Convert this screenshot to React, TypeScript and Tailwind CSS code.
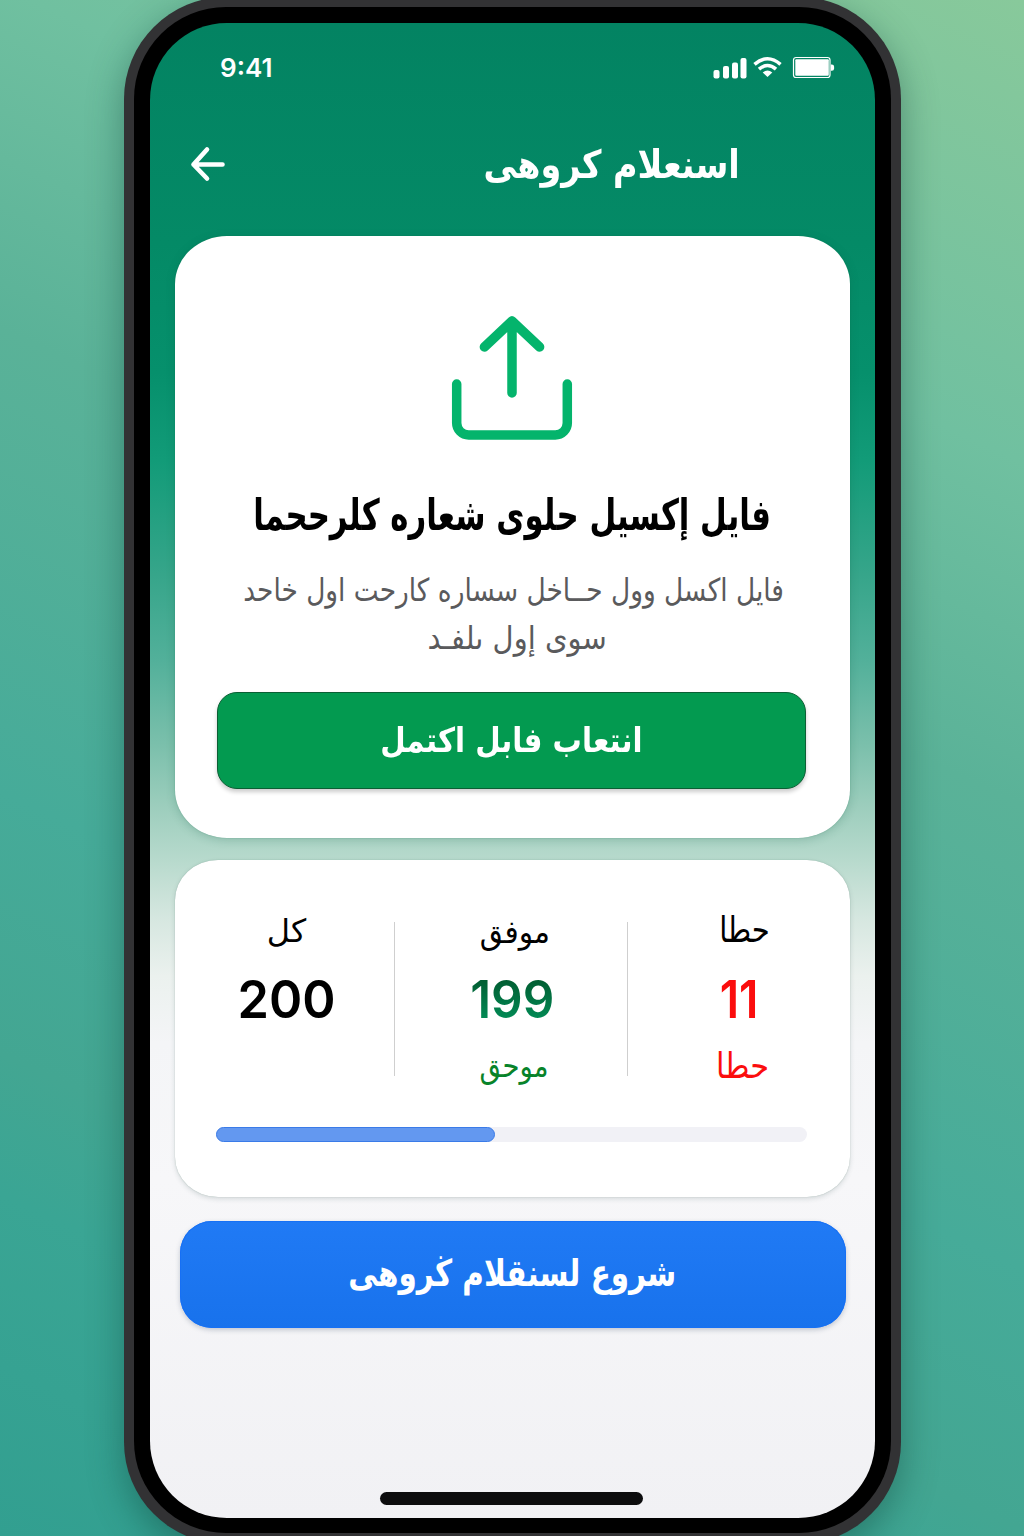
import React from "react";

const fa = "font-['DejaVu_Sans','Noto_Sans',sans-serif]";

function StatusIcons() {
  return (
    <svg className="mt-[32px] h-[26px] w-[124px]" viewBox="0 0 124 26" fill="#fff">
      <rect x="1.500" y="15" width="6" height="8.500" rx="2" />
      <rect x="11" y="11" width="6" height="12.500" rx="2" />
      <rect x="20" y="7.500" width="6" height="16" rx="2" />
      <rect x="28.500" y="3" width="6" height="20.500" rx="2" />
      <g fill="none" stroke="#fff" strokeWidth="3.600">
        <path d="M42.500 9.300 Q55.500 -1.800 68.500 9.300" />
        <path d="M47 14.200 Q55.500 6.800 64 14.200" />
      </g>
      <path d="M50.700 17.600 Q55.500 13.600 60.300 17.600 L55.500 22 Z" />
      <rect x="81.500" y="2.500" width="36.500" height="20" rx="2.500" fill="none" stroke="#fff" strokeWidth="1.200" />
      <rect x="83.300" y="4.300" width="33.500" height="16.500" rx="1" />
      <path d="M118.800 9.500 h1 a2.300 2.300 0 0 1 2.300 2.300 v1.600 a2.300 2.300 0 0 1 -2.300 2.300 h-1 z" />
    </svg>
  );
}

function Word({ className, children }: { className: string; children: React.ReactNode }) {
  return (
    <div dir="rtl" className="flex justify-center">
      <span className={`inline-block whitespace-nowrap ${className}`}>{children}</span>
    </div>
  );
}

export default function App() {
  return (
    <div
      className={`flex h-[1536px] w-[1024px] items-start overflow-hidden bg-[linear-gradient(205deg,#88c99b_0%,#70c0a0_23%,#5ab298_40%,#46ab99_63%,#43a692_76%,#3aa594_83%,#329f90_100%)] pl-[123.500px] ${fa}`}
    >
      <div className="-mt-[3px] h-[1547px] w-[777.500px] shrink-0 rounded-[102px] bg-[#323234] px-[10.500px] pt-[10px] pb-[11px] shadow-[0_12px_36px_rgba(10,60,50,0.42)]">
        <div className="h-full rounded-[92px] bg-black px-4 pt-4 pb-[15px]">
          <div className="flex h-[1495px] flex-col rounded-[77px] bg-[linear-gradient(180deg,#038362_0px,#048a66_220px,#06906c_350px,#129b78_437px,#36a58a_551px,#52b09a_637px,#7cc0ac_724px,#9bcdbc_781px,#b8dacd_838px,#d6e7e0_896px,#ebf1ee_953px,#f4f5f7_1020px,#f7f7f9_1157px,#f1f1f4_1494px)] pr-[24.500px] pl-[25px]">
            <div className="flex h-[90px] items-start justify-between pr-[14px] pl-[45px]">
              <span className="mt-[28px] font-['Inter'] text-[26px] leading-[34px] font-semibold text-white">9:41</span>
              <StatusIcons />
            </div>
            <div className="flex h-[123px] items-start">
              <svg className="mt-[32px] ml-[14px] h-[38px] w-[38px]" viewBox="0 0 38 38" fill="none" stroke="#fff" strokeWidth="4.600" strokeLinecap="round" strokeLinejoin="round">
                <path d="M33.500 19.500H4.500M18 4.500 4.500 19.500l13.500 14" />
              </svg>
              <div className="mt-[22px] ml-[248px] w-[273px]">
                <Word className="scale-x-[0.857] text-[39px] leading-[60px] font-bold text-white">اسنعلام کروهی</Word>
              </div>
            </div>

            <div className="h-[601.500px] shrink-0 rounded-[52px/48px] bg-white px-[42px] pt-[79px] shadow-[0_2px_10px_rgba(20,90,70,0.22),0_0_1px_rgba(0,110,70,0.5)]">
              <svg className="mx-auto h-[126px] w-[124px]" viewBox="0 0 124 126" fill="none" stroke="#04b46c" strokeWidth="9.500" strokeLinecap="round" strokeLinejoin="round">
                <path d="M61 78V6M33.400 32 61 6l27.600 26M5.700 69v39a12 12 0 0 0 12 12h86.600a12 12 0 0 0 12-12V69" />
              </svg>
              <div className="mt-[42px]">
                <Word className="scale-x-[0.717] text-[43px] leading-[64px] font-bold text-black">فایل إکسیل حلوی شعاره کلرححما</Word>
              </div>
              <div className="mt-[19px]">
                <Word className="translate-x-[1px] scale-x-[0.838] text-[31.500px] leading-[48px] text-[#5a5a5c]">فایل اکسل وول حــاخل سساره کارحت اول خاحد</Word>
                <Word className="translate-x-[5px] scale-x-[0.905] text-[32px] leading-[48px] text-[#5a5a5c]">سوی إول ىلفـد</Word>
              </div>
              <button className="mt-[30px] block h-[97px] w-[589px] rounded-[20px] border border-[#0b5f34] bg-[#039a50] shadow-[0_3px_4px_rgba(0,0,0,0.2)]">
                <Word className="scale-x-[0.861] text-[34px] leading-[95px] font-bold text-white">انتعاب فابل اکتمل</Word>
              </button>
            </div>

            <div className="mt-[22.500px] h-[337px] shrink-0 rounded-[43px/40px] bg-white pt-[42px] shadow-[0_2px_5px_rgba(40,70,70,0.16),0_0_1px_rgba(40,90,70,0.4)]">
              <div className="flex h-[190px]">
                <div className="w-[223px]">
                  <Word className="-translate-y-[1px] text-[32px] leading-[60px] text-black">کل</Word>
                  <Word className="translate-y-[1px] scale-x-[0.97] font-['Inter'] text-[52px] leading-[74px] font-semibold text-black">200</Word>
                </div>
                <div className="mt-[20px] -ml-[4px] h-[154px] w-px bg-[#cfcfcf]" />
                <div className="w-[232px]">
                  <Word className="translate-x-[4px] scale-x-[0.93] text-[32px] leading-[60px] text-black">موفق</Word>
                  <Word className="translate-x-[1px] translate-y-[1px] scale-x-[0.95] bg-linear-to-b from-[#015f33] from-25% to-[#028a55] to-75% bg-clip-text font-['Inter'] text-[52px] leading-[74px] font-semibold text-transparent">199</Word>
                  <Word className="translate-x-[3px] scale-x-[0.86] text-[32px] leading-[60px] text-[#08832a]">موحق</Word>
                </div>
                <div className="mt-[20px] h-[154px] w-px bg-[#cfcfcf]" />
                <div className="flex-1">
                  <Word className="translate-x-[5px] -translate-y-[2px] scale-x-[0.83] text-[35px] leading-[60px] text-black">حطا</Word>
                  <Word className="translate-y-[1px] scale-x-[0.88] font-['Inter'] text-[52px] leading-[74px] font-semibold text-[#fb0d0d]">11</Word>
                  <Word className="translate-x-[3px] scale-x-[0.87] text-[35px] leading-[60px] text-[#fb0d0d]">حطا</Word>
                </div>
              </div>
              <div className="mt-[35px] ml-[41px] h-[15px] w-[591px] rounded-full bg-[#f1f1f6]">
                <div className="h-full w-[279px] rounded-full border border-[#3a7be8] bg-[#6398f0]" />
              </div>
            </div>

            <button className="mt-[24px] ml-[5px] block h-[107px] w-[666px] shrink-0 rounded-[32px] bg-[linear-gradient(180deg,#207af5,#1872ec)] shadow-[0_2px_5px_rgba(40,60,90,0.25),inset_0_0_0_1px_#1670f5]">
              <Word className="-translate-x-[1px] -translate-y-[1px] scale-x-[0.795] text-[37px] leading-[94px] font-bold text-white">شروع لسنقلام ڬروهی</Word>
            </button>
            <div className="mt-[164px] -ml-[2px] h-[13px] w-[263px] shrink-0 self-center rounded-full bg-[#0c0c0d]" />
          </div>
        </div>
      </div>
    </div>
  );
}
